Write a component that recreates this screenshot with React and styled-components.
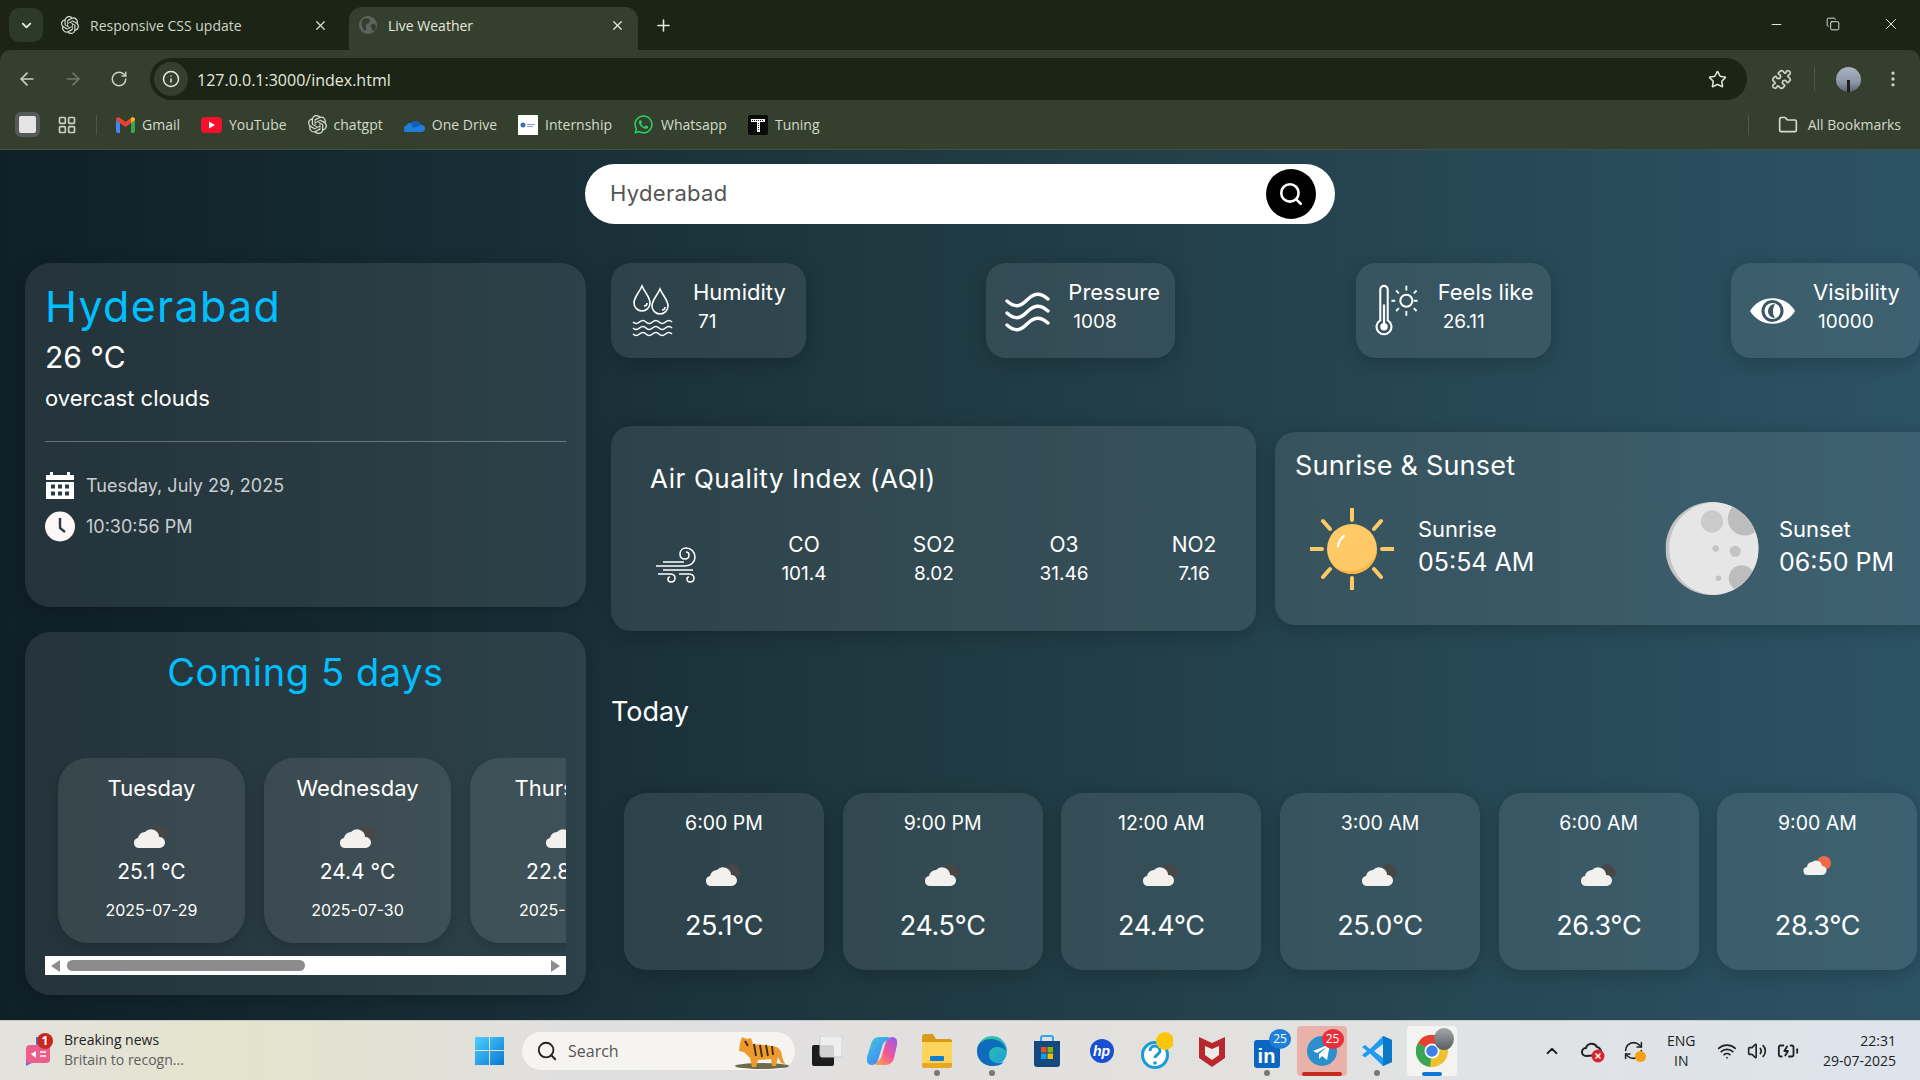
import styled, { createGlobalStyle } from 'styled-components'
import {
  ArrowLeft,
  ArrowRight,
  RotateCw,
  Info,
  Star,
  Puzzle,
  MoreVertical,
  Folder,
  Search as SearchIcon,
  Plus,
  X,
  Minus,
  Copy,
  ChevronDown,
  ChevronUp,
  LayoutGrid,
  Wifi,
  Volume2,
  BatteryCharging,
  RefreshCw,
} from 'lucide-react'
import { SiOpenai } from 'react-icons/si'
import { FaWhatsapp } from 'react-icons/fa'

const days = [
  { name: 'Tuesday', temp: '25.1 °C', date: '2025-07-29' },
  { name: 'Wednesday', temp: '24.4 °C', date: '2025-07-30' },
  { name: 'Thursday', temp: '22.8 °C', date: '2025-07-31' },
]

const hours = [
  { time: '6:00 PM', temp: '25.1°C' },
  { time: '9:00 PM', temp: '24.5°C' },
  { time: '12:00 AM', temp: '24.4°C' },
  { time: '3:00 AM', temp: '25.0°C' },
  { time: '6:00 AM', temp: '26.3°C' },
  { time: '9:00 AM', temp: '28.3°C', rain: true },
]

const pollutants = [
  { name: 'CO', value: '101.4' },
  { name: 'SO2', value: '8.02' },
  { name: 'O3', value: '31.46' },
  { name: 'NO2', value: '7.16' },
]

export default function App() {
  return (
    <>
      <GlobalStyle />
      <Screen>
        <BrowserChrome />
        <Page>
          <SearchBar>
            <SearchText>Hyderabad</SearchText>
            <SearchButton>
              <SearchIcon size={26} strokeWidth={2.4} color="#fff" />
            </SearchButton>
          </SearchBar>
          <Columns>
            <LeftColumn>
              <CurrentCard>
                <City>Hyderabad</City>
                <CurrentTemp>26 °C</CurrentTemp>
                <Condition>overcast clouds</Condition>
                <Divider />
                <MetaRow>
                  <CalendarIcon />
                  <MetaText>Tuesday, July 29, 2025</MetaText>
                </MetaRow>
                <MetaRow>
                  <ClockIcon />
                  <MetaText>10:30:56 PM</MetaText>
                </MetaRow>
              </CurrentCard>
              <ForecastCard>
                <ForecastTitle>Coming 5 days</ForecastTitle>
                <DayRow>
                  {days.map((d) => (
                    <DayCard key={d.date}>
                      <DayName>{d.name}</DayName>
                      <CloudIcon />
                      <DayTemp>{d.temp}</DayTemp>
                      <DayDate>{d.date}</DayDate>
                    </DayCard>
                  ))}
                </DayRow>
                <ScrollTrack>
                  <ScrollArrow $dir="left" />
                  <ScrollThumb />
                  <ScrollArrow $dir="right" />
                </ScrollTrack>
              </ForecastCard>
            </LeftColumn>
            <RightColumn>
              <StatRow>
                <StatCard $w={195}>
                  <HumidityIcon />
                  <StatText>
                    <StatLabel>Humidity</StatLabel>
                    <StatValue>71</StatValue>
                  </StatText>
                </StatCard>
                <StatCard $w={189}>
                  <PressureIcon />
                  <StatText>
                    <StatLabel>Pressure</StatLabel>
                    <StatValue>1008</StatValue>
                  </StatText>
                </StatCard>
                <StatCard $w={195}>
                  <FeelsIcon />
                  <StatText>
                    <StatLabel>Feels like</StatLabel>
                    <StatValue>26.11</StatValue>
                  </StatText>
                </StatCard>
                <StatCard $w={189}>
                  <EyeIcon />
                  <StatText>
                    <StatLabel>Visibility</StatLabel>
                    <StatValue>10000</StatValue>
                  </StatText>
                </StatCard>
              </StatRow>
              <MiddleRow>
                <AqiCard>
                  <AqiHeading>Air Quality Index (AQI)</AqiHeading>
                  <AqiGrid>
                    <WindIcon />
                    {pollutants.map((p) => (
                      <AqiCell key={p.name}>
                        <div>{p.name}</div>
                        <AqiValue>{p.value}</AqiValue>
                      </AqiCell>
                    ))}
                  </AqiGrid>
                </AqiCard>
                <SunCard>
                  <SunHeading>Sunrise &amp; Sunset</SunHeading>
                  <SunRow>
                    <SunGroup>
                      <SunIcon />
                      <SunText>
                        <SunLabel>Sunrise</SunLabel>
                        <SunTime>05:54 AM</SunTime>
                      </SunText>
                    </SunGroup>
                    <SunGroup>
                      <MoonIcon />
                      <SunText>
                        <SunLabel>Sunset</SunLabel>
                        <SunTime>06:50 PM</SunTime>
                      </SunText>
                    </SunGroup>
                  </SunRow>
                </SunCard>
              </MiddleRow>
              <TodayHeading>Today</TodayHeading>
              <HourRow>
                {hours.map((h) => (
                  <HourCard key={h.time}>
                    <HourTime>{h.time}</HourTime>
                    <HourIconSlot>{h.rain ? <RainIcon /> : <CloudIcon />}</HourIconSlot>
                    <HourTemp>{h.temp}</HourTemp>
                  </HourCard>
                ))}
              </HourRow>
            </RightColumn>
          </Columns>
        </Page>
        <WindowsTaskbar />
      </Screen>
    </>
  )
}

function BrowserChrome() {
  return (
    <>
      <TabStrip>
        <TabMenu>
          <ChevronDown size={15} strokeWidth={3} />
        </TabMenu>
        <Tab>
          <SiOpenai size={18} color="#d9dfd3" />
          <TabTitle>Responsive CSS update</TabTitle>
          <X size={15} strokeWidth={2} color="#d9dfd3" />
        </Tab>
        <Tab $active>
          <GlobeIcon />
          <TabTitle>Live Weather</TabTitle>
          <X size={15} strokeWidth={2} color="#e4e9de" />
        </Tab>
        <NewTab>
          <Plus size={19} strokeWidth={2} />
        </NewTab>
        <WindowControls>
          <Minus size={15} strokeWidth={1.5} />
          <Copy size={14} strokeWidth={1.5} />
          <X size={18} strokeWidth={1.3} />
        </WindowControls>
      </TabStrip>
      <Toolbar>
        <NavButton><ArrowLeft size={20} /></NavButton>
        <NavButton $off><ArrowRight size={20} /></NavButton>
        <NavButton><RotateCw size={18} /></NavButton>
        <AddressBar>
          <InfoChip>
            <Info size={18} />
          </InfoChip>
          <AddressText>127.0.0.1:3000/index.html</AddressText>
          <Star size={19} color="#dfe5d8" />
        </AddressBar>
        <ToolbarTools>
          <Puzzle size={21} color="#c9d2c0" />
          <ToolbarRule />
          <Avatar />
          <MoreVertical size={20} color="#c9d2c0" />
        </ToolbarTools>
      </Toolbar>
      <BookmarksBar>
        <AppSquare />
        <LayoutGrid size={20} color="#c9d2c0" />
        <BarRule />
        <Bookmark>
          <GmailIcon />
          Gmail
        </Bookmark>
        <Bookmark>
          <YoutubeIcon />
          YouTube
        </Bookmark>
        <Bookmark>
          <SiOpenai size={19} color="#d9dfd3" />
          chatgpt
        </Bookmark>
        <Bookmark>
          <OneDriveIcon />
          One Drive
        </Bookmark>
        <Bookmark>
          <InternshipIcon />
          Internship
        </Bookmark>
        <Bookmark>
          <FaWhatsapp size={21} color="#25d366" />
          Whatsapp
        </Bookmark>
        <Bookmark>
          <TuningIcon />
          Tuning
        </Bookmark>
        <AllBookmarks>
          <BarRule />
          <Folder size={20} color="#d3dacb" />
          All Bookmarks
        </AllBookmarks>
      </BookmarksBar>
    </>
  )
}

function WindowsTaskbar() {
  return (
    <Taskbar>
      <NewsBlock>
        <NewsIcon />
        <NewsText>
          <div>Breaking news</div>
          <NewsSub>Britain to recogn...</NewsSub>
        </NewsText>
      </NewsBlock>
      <TaskItem>
        <StartIcon />
      </TaskItem>
      <TaskSearch>
        <SearchIcon size={22} strokeWidth={2} color="#222" />
        <TaskSearchText>Search</TaskSearchText>
        <TigerIcon />
      </TaskSearch>
      <TaskItem><TaskViewIcon /></TaskItem>
      <TaskItem><CopilotIcon /></TaskItem>
      <TaskItem $dot><FilesIcon /></TaskItem>
      <TaskItem $dot><EdgeIcon /></TaskItem>
      <TaskItem><StoreIcon /></TaskItem>
      <TaskItem><HpIcon>hp</HpIcon></TaskItem>
      <TaskItem><HelpIcon /></TaskItem>
      <TaskItem><McafeeIcon /></TaskItem>
      <TaskItem $dot>
        <LinkedinTile>in</LinkedinTile>
        <CountBadge $bg="#1f7fd6">25</CountBadge>
      </TaskItem>
      <TaskItem $tone="telegram">
        <TelegramIcon />
        <CountBadge $bg="#e8303a">25</CountBadge>
      </TaskItem>
      <TaskItem $dot><VscodeIcon /></TaskItem>
      <TaskItem $tone="chrome">
        <ChromeIcon />
        <ChromeAvatar />
      </TaskItem>
      <Tray>
        <ChevronUp size={18} strokeWidth={2.4} color="#222" />
        <TrayCloudIcon />
        <TraySync>
          <RefreshCw size={21} strokeWidth={1.8} color="#222" />
          <SyncDot />
        </TraySync>
        <LangBlock>
          <div>ENG</div>
          <div>IN</div>
        </LangBlock>
        <TrayStatus>
          <Wifi size={20} color="#222" />
          <Volume2 size={20} color="#222" />
          <BatteryCharging size={22} color="#222" />
        </TrayStatus>
        <ClockBlock>
          <div>22:31</div>
          <div>29-07-2025</div>
        </ClockBlock>
      </Tray>
    </Taskbar>
  )
}

/* drawings */

function GlobeIcon() {
  return (
    <svg width="18" height="18" viewBox="0 0 18 18">
      <circle cx="9" cy="9" r="9" fill="#5d6462" />
      <path d="M4 3c3-1 6-1 7 1S8 8 7 9s1 3 0 5-3-1-4-4 0-5 1-7zM13 8c2-1 4 1 4 3s-2 4-3 4-1-3-2-4 0-2 1-3z" fill="#353f2e" />
    </svg>
  )
}

function CloudIcon() {
  return (
    <svg width="36" height="24" viewBox="0 0 36 24">
      <path d="M19 15a5 5 0 0 1 1-10 7 7 0 0 1 12 1 5 5 0 0 1 0 9z" fill="#474747" />
      <path
        d="M5 24a5 5 0 0 1-1-9.9A7 7 0 0 1 11 8a8 8 0 0 1 14 5 5.5 5.5 0 0 1 1 11z"
        fill="#f2f1ee"
      />
    </svg>
  )
}

function RainIcon() {
  return (
    <svg width="36" height="32" viewBox="0 0 36 32">
      <circle cx="25" cy="9" r="7" fill="#ee6b4a" />
      <path
        d="M9 21a4 4 0 0 1-1-8 5.5 5.5 0 0 1 5-5 6 6 0 0 1 10 4 4.5 4.5 0 0 1 0 9z"
        fill="#f2f1ee"
      />
      <path d="M12 24l-1 4M16 24l-1 5" stroke="#555" strokeWidth="1" />
    </svg>
  )
}

function CalendarIcon() {
  return (
    <svg width="30" height="28" viewBox="0 0 30 28" fill="#fff">
      <path d="M1 4h4V1h3v3h14V1h3v3h4v5H1z" />
      <path d="M1 11h28v17H1z" />
      <g fill="#2a3d46">
        <rect x="6" y="13.5" width="4" height="4" />
        <rect x="13" y="13.5" width="4" height="4" />
        <rect x="20" y="13.5" width="4" height="4" />
        <rect x="6" y="20.5" width="4" height="4" />
        <rect x="13" y="20.5" width="4" height="4" />
        <rect x="20" y="20.5" width="4" height="4" />
      </g>
    </svg>
  )
}

function ClockIcon() {
  return (
    <svg width="30" height="31" viewBox="0 0 30 31">
      <circle cx="15" cy="15.5" r="15" fill="#fdf7f7" />
      <path d="M15 7v10l5 4" fill="none" stroke="#2a3d46" strokeWidth="2.4" />
    </svg>
  )
}

function HumidityIcon() {
  return (
    <StatSvg viewBox="0 0 45 52" fill="none" stroke="#fff" strokeWidth="1.6">
      <path d="M12 1C9 8 4 12 4 18a8 8 0 0 0 16 0C20 12 15 8 12 1z" />
      <path d="M30 4c-3 7-8 11-8 17a8 8 0 0 0 16 0c0-6-5-10-8-17z" />
      <path d="M14 21a3 3 0 0 0 3-3M32 25a3 3 0 0 0 3-3" />
      <path d="M3 37q3 3 6.500 0t6.500 0 6.500 0 6.500 0 6.500 0 6.500 0" />
      <path d="M3 43q3 3 6.500 0t6.500 0 6.500 0 6.500 0 6.500 0 6.500 0" />
      <path d="M3 49q3 3 6.500 0t6.500 0 6.500 0 6.500 0 6.500 0 6.500 0" />
    </StatSvg>
  )
}

function PressureIcon() {
  return (
    <StatSvg viewBox="0 0 45 52" fill="none" stroke="#fff" strokeWidth="3.4" strokeLinecap="round">
      <path d="M2 16c8 7 13 6 20-1s13-8 21-1" />
      <path d="M2 28c8 7 13 6 20-1s13-8 21-1" />
      <path d="M2 40c8 7 13 6 20-1s13-8 21-1" />
    </StatSvg>
  )
}

function FeelsIcon() {
  return (
    <StatSvg viewBox="0 0 45 58" fill="none" stroke="#fff" strokeWidth="2">
      <path d="M4 6a4 4 0 0 1 8 0v33a8 8 0 1 1-8 0z" strokeWidth="2.2" />
      <path d="M8 22v24" strokeWidth="2.4" />
      <circle cx="8" cy="46" r="3" fill="#fff" />
      <circle cx="32" cy="18" r="6.500" strokeWidth="2.2" />
      <path d="M32 2v5M32 29v5M16 18h4M44 18h-4M21 7l3 3M43 7l-3 3M21 29l3-3M43 29l-3-3" />
    </StatSvg>
  )
}

function EyeIcon() {
  return (
    <StatSvg viewBox="0 0 45 52">
      <path d="M0 26C10 9 35 9 45 26 35 43 10 43 0 26z" fill="#fff" />
      <circle cx="22.500" cy="26" r="11" fill="#385664" />
      <circle cx="22.500" cy="26" r="8" fill="#fff" />
      <path d="M25 19a7 7 0 0 0-7 7c0 4 3 7 7 7a10 10 0 0 1-2-7c0-3 1-5 2-7z" fill="#385664" />
    </StatSvg>
  )
}

function WindIcon() {
  return (
    <WindSvg viewBox="0 0 42 36" fill="none" stroke="#fff" strokeWidth="1.500">
      <path d="M1 19h28c8 0 11-5 11-9 0-5-4-9-9-9-4 0-6 3-6 6s2 5 5 5 4-2 4-4-1-3-3-3" />
      <path d="M8 15h21M8 23h30" />
      <path d="M3 27h12c3 0 5 1 5 4s-2 4-4 4-3-1-3-3 1-2 2-2" />
      <path d="M24 27h9c4 0 6 1 6 4s-2 4-4 4-3-1-3-3 1-2 2-2" />
    </WindSvg>
  )
}

function SunIcon() {
  return (
    <SunSvg viewBox="0 0 84 82">
      <circle cx="42" cy="41" r="25" fill="#ffc965" />
      <path d="M22 56A25 25 0 0 0 67 41 27 27 0 0 1 22 56z" fill="#fbb540" />
      <path d="M28 38c1-5 3-8 6-10" stroke="#fff" strokeWidth="2.4" strokeLinecap="round" fill="none" />
      <path
        d="M42 1v11M42 70v11M1 41h11M72 41h11M13 13l7 8M71 13l-7 8M13 69l7-8M71 69l-7-8"
        stroke="#ffc965"
        strokeWidth="4"
        strokeLinecap="round"
      />
    </SunSvg>
  )
}

function MoonIcon() {
  return (
    <MoonSvg viewBox="0 0 100 100">
      <defs>
        <clipPath id="moonClip">
          <circle cx="50" cy="50" r="50" />
        </clipPath>
      </defs>
      <g clipPath="url(#moonClip)">
        <rect width="100" height="100" fill="#c4c4c4" />
        <circle cx="54" cy="50" r="50" fill="#e6e6e6" />
        <circle cx="50" cy="21" r="12" fill="#cbcbcb" />
        <circle cx="85" cy="18" r="18" fill="#bdbdbd" />
        <circle cx="82" cy="82" r="14" fill="#bdbdbd" />
        <circle cx="54" cy="50" r="3.500" fill="#c4c4c4" />
        <circle cx="75" cy="53" r="6" fill="#c4c4c4" />
        <circle cx="57" cy="82" r="3" fill="#c4c4c4" />
      </g>
    </MoonSvg>
  )
}

function GmailIcon() {
  return (
    <svg width="19" height="16" viewBox="0 0 19 16">
      <path d="M0 3v11a2 2 0 0 0 2 2h2V6z" fill="#4285f4" />
      <path d="M19 3v11a2 2 0 0 1-2 2h-2V6z" fill="#34a853" />
      <path d="M0 3l4 3 5.500 4L15 6l4-3c0-3-2.500-3.500-4-2L9.500 5 4 1C2.500-.5 0 0 0 3z" fill="#ea4335" />
      <path d="M15 6l4-3c0-3-2.500-3.500-4-2z" fill="#fbbc04" />
    </svg>
  )
}

function YoutubeIcon() {
  return (
    <svg width="21" height="16" viewBox="0 0 21 16">
      <rect width="21" height="16" rx="4" fill="#f70f2c" />
      <path d="M8 4.500v7l6-3.500z" fill="#fff" />
    </svg>
  )
}

function OneDriveIcon() {
  return (
    <svg width="21" height="14" viewBox="0 0 21 14">
      <path d="M3 14a3 3 0 0 1-1-6 5 5 0 0 1 5-3 6 6 0 0 1 10 2 3.500 3.500 0 0 1 1 7z" fill="#1f7fd8" />
      <path d="M7 5a6 6 0 0 1 10 2l-8 3z" fill="#0f5fb8" />
    </svg>
  )
}

function InternshipIcon() {
  return (
    <svg width="20" height="20" viewBox="0 0 20 20">
      <rect width="20" height="20" fill="#fff" />
      <circle cx="5" cy="10" r="2.500" fill="#3f6fb5" />
      <path d="M9 9h8v1H9zM9 11h6v1H9z" fill="#8aa0bd" />
    </svg>
  )
}

function TuningIcon() {
  return (
    <svg width="20" height="20" viewBox="0 0 20 20">
      <rect width="20" height="20" rx="2" fill="#0b0b0b" />
      <path d="M3 4h14v3h-5v10H9V7H3z" fill="#fff" />
      <path d="M4 5.500h12M10.500 8v8" stroke="#0b0b0b" strokeDasharray="1 1" />
    </svg>
  )
}

function NewsIcon() {
  return (
    <NewsSvg viewBox="0 0 34 36">
      <path d="M12 4h14v24H12z" fill="#3d7be0" />
      <path d="M2 15l6-1v16l-6 3z" fill="#8c63dc" />
      <rect x="2" y="12" width="24" height="18" rx="4" fill="#ee5e8c" />
      <path d="M7 21l5-3v7z" fill="#fff" />
      <path d="M16 19h6M16 23h6" stroke="#fff" strokeWidth="1.500" />
      <circle cx="21" cy="8" r="8" fill="#c9271f" />
      <NewsCount x="21" y="12">1</NewsCount>
    </NewsSvg>
  )
}

function StartIcon() {
  return (
    <svg width="29" height="29" viewBox="0 0 29 29">
      <defs>
        <linearGradient id="startFill" x1="0" y1="0" x2="1" y2="1">
          <stop offset="0" stopColor="#4fd0fb" />
          <stop offset="1" stopColor="#0678d4" />
        </linearGradient>
      </defs>
      <path d="M0 1h14v13H0zM15 1h14v13H15zM0 15h14v14H0zM15 15h14v14H15z" fill="url(#startFill)" />
    </svg>
  )
}

function TigerIcon() {
  return (
    <TigerSvg viewBox="0 0 58 36">
      <ellipse cx="30" cy="33" rx="27" ry="3" fill="#6e6a4a" />
      <path d="M10 4l5 2 4-1 2 6 20 2c6 1 9 5 9 11l3 7-4-1-3-6-2 9h-4l-1-7-13 1-2 7h-4l-2-9-6-6-5-1 1-8z" fill="#ef9a2c" />
      <path d="M22 11l2 12M28 12l2 12M34 12l2 11M40 13l1 9M13 8l3 5" stroke="#3a2a12" strokeWidth="1.800" />
    </TigerSvg>
  )
}

function TaskViewIcon() {
  return (
    <svg width="31" height="30" viewBox="0 0 31 30">
      <rect x="1" y="9" width="22" height="21" rx="2" fill="#1d1d1d" />
      <rect x="9" y="0" width="22" height="21" rx="2" fill="#f1f1f1" fillOpacity="0.85" stroke="#ccc" />
    </svg>
  )
}

function CopilotIcon() {
  return (
    <svg width="30" height="30" viewBox="0 0 30 30">
      <defs>
        <linearGradient id="coA" x1="0" y1="0" x2="1" y2="1">
          <stop offset="0" stopColor="#45d0c8" />
          <stop offset="0.5" stopColor="#3f9ff0" />
          <stop offset="1" stopColor="#7c6cf0" />
        </linearGradient>
        <linearGradient id="coB" x1="0" y1="1" x2="1" y2="0">
          <stop offset="0" stopColor="#f7b23b" />
          <stop offset="0.5" stopColor="#f2559a" />
          <stop offset="1" stopColor="#8f5cf0" />
        </linearGradient>
      </defs>
      <path d="M18 29h-8c-3 0-3-3-3-3 5 0 7-3 8-7l3-10c1-4 3-8 7-8 4 0 6 3 5 8l-3 13c-1 4-4 7-9 7z" fill="url(#coB)" />
      <path d="M12 1h8c3 0 3 3 3 3-5 0-7 3-8 7l-3 10c-1 4-3 8-7 8-4 0-6-3-5-8L4 8c1-4 4-7 8-7z" fill="url(#coA)" />
    </svg>
  )
}

function FilesIcon() {
  return (
    <svg width="32" height="36" viewBox="0 0 32 36">
      <path d="M1 4a3 3 0 0 1 3-3h8l3 5h14a2 2 0 0 1 2 2v4H1z" fill="#d99a15" />
      <path d="M1 9h30v24a2 2 0 0 1-2 2H3a2 2 0 0 1-2-2z" fill="#fcd35b" />
      <rect x="9" y="23" width="14" height="5" rx="1" fill="#0f7fd0" />
      <path d="M1 30h30v3a2 2 0 0 1-2 2H3a2 2 0 0 1-2-2z" fill="#e9a81f" />
    </svg>
  )
}

function EdgeIcon() {
  return (
    <svg width="30" height="30" viewBox="0 0 30 30">
      <defs>
        <linearGradient id="edgeA" x1="0" y1="0" x2="1" y2="1">
          <stop offset="0" stopColor="#37d08d" />
          <stop offset="1" stopColor="#1b9de2" />
        </linearGradient>
      </defs>
      <circle cx="15" cy="15" r="15" fill="url(#edgeA)" />
      <path d="M0 15C0 6 8 3 14 3c8 0 14 5 15 12-3-4-9-5-13-3-4 2-5 7-3 11 2 3 8 6 14 3-3 3-7 4-11 4C7 30 0 24 0 15z" fill="#0f6cbd" />
    </svg>
  )
}

function StoreIcon() {
  return (
    <svg width="28" height="34" viewBox="0 0 28 34">
      <path d="M8 8V4a2 2 0 0 1 2-2h8a2 2 0 0 1 2 2v4" fill="none" stroke="#2aa8e8" strokeWidth="2" />
      <path d="M1 7h26v23a3 3 0 0 1-3 3H4a3 3 0 0 1-3-3z" fill="#14497f" />
      <path d="M8 13h5.500v5.500H8z" fill="#f25022" />
      <path d="M14.500 13H20v5.500h-5.500z" fill="#7fba00" />
      <path d="M8 19.500h5.500V25H8z" fill="#00a4ef" />
      <path d="M14.500 19.500H20V25h-5.500z" fill="#ffb900" />
    </svg>
  )
}

function HelpIcon() {
  return (
    <svg width="32" height="38" viewBox="0 0 32 38">
      <circle cx="14" cy="23" r="12.500" fill="#fff" stroke="#1a9bd8" strokeWidth="3" />
      <path d="M9 19c0-3 2-5 5-5s5 2 5 5-5 4-5 7" fill="none" stroke="#1a9bd8" strokeWidth="3" />
      <circle cx="14" cy="31" r="1.800" fill="#1a9bd8" />
      <circle cx="24" cy="9" r="9" fill="#fdc50c" />
    </svg>
  )
}

function McafeeIcon() {
  return (
    <svg width="28" height="32" viewBox="0 0 28 32">
      <path d="M1 2l13 6 13-6v21l-13 9-13-9z" fill="#b9272f" />
      <path d="M7 11l7 3 7-3v9l-7 5-7-5z" fill="#eceae6" />
    </svg>
  )
}

function TelegramIcon() {
  return (
    <svg width="30" height="30" viewBox="0 0 30 30">
      <circle cx="15" cy="15" r="15" fill="#2a8fcb" />
      <path d="M6 15l17-7-3 16-5-4-3 3v-5l8-7-10 6z" fill="#fff" />
    </svg>
  )
}

function VscodeIcon() {
  return (
    <svg width="30" height="30" viewBox="0 0 30 30">
      <path d="M21 0l9 4v22l-9 4-13-12.500-5 4L0 19l5-4-5-4 3-2 5 4z" fill="#1f9cf0" />
      <path d="M21 8l-9 7 9 7z" fill="#e6e8ea" />
      <path d="M21 0l9 4v22l-9 4z" fill="#0a78c8" />
    </svg>
  )
}

function ChromeIcon() {
  return (
    <svg width="32" height="32" viewBox="0 0 32 32">
      <circle cx="16" cy="16" r="16" fill="#f1c02e" />
      <path d="M16 16L2 8a16 16 0 0 1 28 0z" fill="#e5402f" />
      <path d="M16 16L2 8a16 16 0 0 0 12 24z" fill="#3aa655" />
      <circle cx="16" cy="16" r="7.500" fill="#fff" />
      <circle cx="16" cy="16" r="5.800" fill="#3d80e8" />
    </svg>
  )
}

function TrayCloudIcon() {
  return (
    <TrayCloudSvg viewBox="0 0 24 24">
      <path d="M5 17a4 4 0 0 1 0-8 6 6 0 0 1 11-1 5 5 0 0 1 3 8z" fill="none" stroke="#222" strokeWidth="2" />
      <circle cx="17" cy="17" r="6.500" fill="#d9232e" />
      <path d="M14.500 14.500l5 5M19.500 14.500l-5 5" stroke="#fff" strokeWidth="1.500" />
    </TrayCloudSvg>
  )
}

/* page styles */

const GlobalStyle = createGlobalStyle`
  * {
    box-sizing: border-box;
  }

  html,
  body {
    margin: 0;
    height: 100%;
    overflow: hidden;
  }

  body {
    font-family: 'Inter', 'Lato', sans-serif;
  }
`

const Screen = styled.div`
  display: flex;
  flex-direction: column;
  width: 1920px;
  height: 1080px;
  overflow: hidden;
  background: #1b2415;
`

const Page = styled.main`
  flex: 1;
  min-height: 0;
  overflow: hidden;
  padding: 14px 0 0 25px;
  color: #fff;
  background: linear-gradient(to right, #0f2027, #203a43, #2c5364);
`

const SearchBar = styled.div`
  display: flex;
  align-items: center;
  justify-content: space-between;
  width: 750px;
  height: 60px;
  margin-left: 560px;
  padding: 0 19px 0 25px;
  border-radius: 30px;
  background: #fff;
`

const SearchText = styled.span`
  margin-bottom: 2px;
  font-size: 22px;
  letter-spacing: 0.3px;
  color: #555;
`

const SearchButton = styled.div`
  display: flex;
  align-items: center;
  justify-content: center;
  width: 50px;
  height: 50px;
  border-radius: 50%;
  background: #000;
`

const Columns = styled.div`
  display: flex;
  gap: 25px;
  margin-top: 39px;
`

const LeftColumn = styled.div`
  display: flex;
  flex-direction: column;
  gap: 25px;
  flex: 0 0 561px;
  min-width: 0;
`

const Panel = styled.section`
  border-radius: 25px;
  background: rgba(255, 255, 255, 0.085);
  box-shadow: 0 4px 20px rgba(0, 0, 0, 0.2);
`

const CurrentCard = styled(Panel)`
  height: 344px;
  padding: 17px 20px 0;
`

const City = styled.h1`
  margin: 0;
  font-size: 43px;
  font-weight: 400;
  letter-spacing: 1.3px;
  line-height: 52px;
  color: #00bfff;
`

const CurrentTemp = styled.div`
  margin-top: 5px;
  font-size: 30px;
  line-height: 40px;
`

const Condition = styled.div`
  margin-top: 6px;
  font-size: 22px;
  line-height: 30px;
`

const Divider = styled.hr`
  height: 1px;
  margin: 28px 0 29px;
  border: 0;
  background: rgba(255, 255, 255, 0.3);
`

const MetaRow = styled.div`
  display: flex;
  align-items: center;
  gap: 11px;
  margin-bottom: 12px;
`

const MetaText = styled.span`
  font-size: 18px;
  color: #c9cfd2;
`

const ForecastCard = styled(Panel)`
  height: 363px;
  padding: 15px 20px 0;
`

const ForecastTitle = styled.h2`
  margin: 0;
  font-size: 38px;
  font-weight: 400;
  letter-spacing: 0.6px;
  line-height: 50px;
  text-align: center;
  color: #00bfff;
`

const DayRow = styled.div`
  display: flex;
  gap: 19px;
  height: 200px;
  margin-top: 61px;
  padding-left: 13px;
  overflow: hidden;
`

const DayCard = styled.div`
  display: flex;
  flex: 0 0 187px;
  flex-direction: column;
  align-items: center;
  height: 185px;
  padding-top: 16px;
  border-radius: 30px;
  background: rgba(255, 255, 255, 0.09);
  box-shadow: 0 4px 12px rgba(0, 0, 0, 0.15);
`

const DayName = styled.div`
  margin-bottom: 22px;
  font-size: 22px;
  line-height: 28px;
`

const DayTemp = styled.div`
  margin-top: 9px;
  font-size: 21px;
  line-height: 30px;
`

const DayDate = styled.div`
  margin-top: 10px;
  font-size: 16px;
  line-height: 26px;
`

const ScrollTrack = styled.div`
  display: flex;
  align-items: center;
  justify-content: space-between;
  height: 19px;
  margin-top: -2px;
  padding: 0 6px;
  background: #fff;
`

const ScrollThumb = styled.div`
  width: 238px;
  height: 11px;
  margin: 0 auto 0 7px;
  border-radius: 6px;
  background: #8c8c8c;
`

const ScrollArrow = styled.span`
  width: 0;
  height: 0;
  border-top: 6px solid transparent;
  border-bottom: 6px solid transparent;
  border-left: ${(props) => (props.$dir === 'right' ? '9px solid #8c8c8c' : '0')};
  border-right: ${(props) => (props.$dir === 'left' ? '9px solid #8c8c8c' : '0')};
`

const RightColumn = styled.div`
  flex: 1;
  min-width: 0;
`

const StatRow = styled.div`
  display: flex;
  justify-content: space-between;
`

const StatCard = styled(Panel)`
  display: flex;
  align-items: center;
  flex: 0 0 ${(props) => props.$w}px;
  gap: 18px;
  height: 95px;
  padding: 0 0 0 19px;
  border-radius: 20px;
`

const StatSvg = styled.svg`
  flex: 0 0 45px;
  width: 45px;
  height: 54px;
`

const StatText = styled.div`
  padding-bottom: 8px;
  white-space: nowrap;
`

const StatLabel = styled.div`
  font-size: 22px;
  line-height: 29px;
`

const StatValue = styled.div`
  padding-left: 5px;
  font-size: 19px;
  line-height: 29px;
`

const MiddleRow = styled.div`
  display: flex;
  align-items: center;
  gap: 19px;
  margin-top: 68px;
`

const AqiCard = styled(Panel)`
  flex: 0 0 645px;
  min-width: 0;
  height: 205px;
  padding: 35px 0 0 39px;
  border-radius: 20px;
`

const AqiHeading = styled.h3`
  margin: 0;
  font-size: 26px;
  font-weight: 400;
  letter-spacing: 0.6px;
  line-height: 36px;
`

const AqiGrid = styled.div`
  display: grid;
  grid-template-columns: 89px repeat(4, 130px);
  align-items: center;
  margin-top: 33px;
`

const WindSvg = styled.svg`
  width: 42px;
  height: 36px;
  margin: 12px 0 0 5px;
`

const AqiCell = styled.div`
  font-size: 21px;
  line-height: 29px;
  text-align: center;
`

const AqiValue = styled.div`
  font-size: 19px;
`

const SunCard = styled(Panel)`
  flex: 0 0 660px;
  height: 193px;
  padding: 16px 0 0 20px;
  border-radius: 20px;
`

const SunHeading = styled.h3`
  margin: 0;
  font-size: 27px;
  font-weight: 400;
  letter-spacing: 0.2px;
  line-height: 36px;
`

const SunRow = styled.div`
  display: flex;
  align-items: center;
  margin-top: 18px;
`

const SunGroup = styled.div`
  display: flex;
  flex: 0 0 370px;
  align-items: center;
  gap: 20px;
`

const SunText = styled.div`
  padding-bottom: 4px;
`

const SunSvg = styled.svg`
  width: 84px;
  height: 82px;
  margin: 0 4px 0 15px;
`

const MoonSvg = styled.svg`
  width: 94px;
  height: 93px;
`

const SunLabel = styled.div`
  font-size: 22px;
  line-height: 30px;
`

const SunTime = styled.div`
  font-size: 25px;
  line-height: 36px;
  white-space: nowrap;
`

const TodayHeading = styled.h3`
  margin: 63px 0 0;
  font-size: 27px;
  font-weight: 400;
  line-height: 36px;
`

const HourRow = styled.div`
  display: flex;
  gap: 18.7px;
  margin-top: 63px;
  padding-left: 13px;
`

const HourCard = styled(Panel)`
  display: flex;
  flex: 0 0 200px;
  flex-direction: column;
  align-items: center;
  height: 177px;
  padding-top: 16px;
  border-radius: 22px;
`

const HourTime = styled.div`
  font-size: 19.5px;
  line-height: 28px;
`

const HourIconSlot = styled.div`
  display: flex;
  align-items: flex-end;
  justify-content: center;
  height: 36px;
  margin-top: 13px;
`

const HourTemp = styled.div`
  margin-top: 22px;
  font-size: 27px;
  letter-spacing: -0.4px;
  line-height: 36px;
`

/* browser chrome */

const TabStrip = styled.div`
  display: flex;
  flex: 0 0 50px;
  align-items: flex-end;
  padding-left: 9px;
  font-family: 'Open Sans', sans-serif;
  background: #1b2415;
`

const TabMenu = styled.div`
  display: flex;
  align-items: center;
  justify-content: center;
  width: 34px;
  height: 34px;
  margin: 0 0 8px 0;
  border-radius: 10px;
  color: #e4e9de;
  background: #2e3a28;
`

const Tab = styled.div`
  position: relative;
  display: flex;
  flex: 0 0 ${(props) => (props.$active ? '289px' : '310px')};
  align-items: center;
  height: 43px;
  margin-left: ${(props) => (props.$active ? '-4px' : '0')};
  padding: 0 ${(props) => (props.$active ? '13px' : '25px')} 7px ${(props) => (props.$active ? '10px' : '18px')};
  border-radius: 13px 13px 0 0;
  color: ${(props) => (props.$active ? '#e4e9de' : '#cdd5c5')};
  background: ${(props) => (props.$active ? '#353f2e' : 'transparent')};
`

const TabTitle = styled.span`
  flex: 1;
  margin-left: 11px;
  font-size: 14px;
`

const NewTab = styled.div`
  display: flex;
  align-items: center;
  height: 50px;
  margin-left: 16px;
  color: #e4e9de;
`

const WindowControls = styled.div`
  display: flex;
  align-items: center;
  gap: 42px;
  height: 48px;
  margin-left: auto;
  padding: 0 20px 0 0;
  align-self: flex-start;
  color: #f1f3ee;
`

const Toolbar = styled.div`
  display: flex;
  flex: 0 0 50px;
  align-items: flex-end;
  gap: 0;
  padding: 0 0 0 4px;
  border-radius: 10px 10px 0 0;
  background: #353f2e;
`

const NavButton = styled.div`
  display: flex;
  align-items: center;
  justify-content: center;
  width: 46px;
  height: 42px;
  color: ${(props) => (props.$off ? '#6f7a67' : '#c9d2c0')};
`

const AddressBar = styled.div`
  display: flex;
  align-items: center;
  width: 1597px;
  height: 42px;
  margin-left: 8px;
  padding: 0 20px 0 4px;
  border-radius: 21px;
  background: #1b2415;
`

const InfoChip = styled.div`
  display: flex;
  align-items: center;
  justify-content: center;
  width: 34px;
  height: 34px;
  border-radius: 50%;
  color: #e4e9de;
  background: #353f2e;
`

const AddressText = styled.span`
  flex: 1;
  margin: 2px 0 0 9px;
  font-family: 'Open Sans', sans-serif;
  font-size: 16px;
  color: #e4e9de;
`

const ToolbarTools = styled.div`
  display: flex;
  align-items: center;
  height: 42px;
  padding-left: 24px;
`

const ToolbarRule = styled.span`
  width: 1px;
  height: 24px;
  margin: 0 21px 0 22px;
  background: #4d5946;
`

const Avatar = styled.span`
  position: relative;
  width: 25px;
  height: 25px;
  margin-right: 22px;
  border-radius: 50%;
  background: linear-gradient(#a9b4c4, #8a93a3 65%, #5c5f68);

  &::after {
    content: '';
    position: absolute;
    left: 11px;
    bottom: 0;
    width: 3px;
    height: 12px;
    background: #1c1c22;
  }
`

const BookmarksBar = styled.div`
  display: flex;
  flex: 0 0 50px;
  align-items: center;
  padding-left: 15px;
  font-family: 'Open Sans', sans-serif;
  font-size: 14px;
  color: #d3dacb;
  background: #353f2e;
  border-bottom: 1px solid #46503e;
`

const AppSquare = styled.span`
  width: 25px;
  height: 25px;
  margin-right: 17px;
  border: 4px solid #555b5a;
  border-radius: 6px;
  background: #e4e4e4;
`

const BarRule = styled.span`
  width: 1px;
  height: 20px;
  margin: 0 19px;
  background: #4d5946;
`

const Bookmark = styled.span`
  display: flex;
  align-items: center;
  gap: 7px;
  margin-right: 21px;
  white-space: nowrap;
`

const AllBookmarks = styled.span`
  display: flex;
  align-items: center;
  gap: 10px;
  margin-left: auto;
  padding-right: 19px;
  white-space: nowrap;
`

/* taskbar */

const Taskbar = styled.footer`
  display: flex;
  flex: 0 0 60px;
  align-items: center;
  font-family: 'Open Sans', sans-serif;
  color: #222;
  background: linear-gradient(to right, #e3e2de, #e4e4cc 12%, #e0dfe0 30%, #e3e1de 60%, #dde4ec);
  border-top: 1px solid #c9c9c9;
`

const NewsBlock = styled.div`
  display: flex;
  flex: 0 0 462px;
  align-items: center;
  gap: 6px;
  padding-left: 24px;
`

const NewsSvg = styled.svg`
  width: 34px;
  height: 36px;
`

const NewsCount = styled.text`
  font-size: 12px;
  font-weight: 700;
  text-anchor: middle;
  fill: #fff;
`

const NewsText = styled.div`
  margin-bottom: 1px;
  font-size: 14px;
  line-height: 20px;
`

const NewsSub = styled.div`
  color: #5d5d5d;
`

const TaskSearch = styled.div`
  display: flex;
  flex: 0 0 273px;
  align-items: center;
  height: 38px;
  margin: 0 4px 0 5px;
  padding-left: 14px;
  border-radius: 19px;
  background: #f5f4f1;
`

const TaskSearchText = styled.span`
  margin-left: 10px;
  font-size: 16px;
  color: #555;
`

const TigerSvg = styled.svg`
  width: 58px;
  height: 36px;
  margin-left: auto;
  margin-right: 5px;
`

const TaskItem = styled.div`
  position: relative;
  display: flex;
  flex: 0 0 55px;
  align-items: center;
  justify-content: center;
  height: 50px;
  border-radius: 4px;
  background: ${(props) =>
    props.$tone === 'telegram' ? '#e8b2ab' : props.$tone === 'chrome' ? '#f3f3f2' : 'transparent'};
  ${(props) => props.$tone && 'flex-basis: 50px; margin: 0 2.5px;'}

  &::after {
    content: '';
    position: absolute;
    left: 50%;
    bottom: 0;
    transform: translateX(-50%);
    width: ${(props) => (props.$tone === 'telegram' ? '40px' : props.$tone === 'chrome' ? '20px' : '6px')};
    height: ${(props) => (props.$tone ? '4px' : '6px')};
    border-radius: 3px;
    display: ${(props) => (props.$dot || props.$tone ? 'block' : 'none')};
    background: ${(props) =>
      props.$tone === 'telegram' ? '#c5281c' : props.$tone === 'chrome' ? '#0f78d4' : '#777'};
  }
`

const HpIcon = styled.span`
  display: flex;
  align-items: center;
  justify-content: center;
  width: 24px;
  height: 24px;
  border-radius: 50%;
  font-family: 'Liberation Sans', sans-serif;
  font-size: 14px;
  font-style: italic;
  font-weight: 700;
  color: #fff;
  background: #1a4fd0;
`

const LinkedinTile = styled.span`
  display: flex;
  align-items: flex-end;
  justify-content: center;
  width: 26px;
  height: 28px;
  margin-top: 6px;
  border-radius: 3px;
  font-family: 'Liberation Sans', sans-serif;
  font-size: 20px;
  font-weight: 700;
  color: #fff;
  background: #0a66c2;
`

const CountBadge = styled.span`
  position: absolute;
  top: 3px;
  right: 3px;
  display: flex;
  align-items: center;
  justify-content: center;
  width: 22px;
  height: 20px;
  border-radius: 50%;
  font-size: 12px;
  color: #fff;
  background: ${(props) => props.$bg};
`

const ChromeAvatar = styled.span`
  position: absolute;
  top: 2px;
  right: 3px;
  width: 20px;
  height: 22px;
  border-radius: 50%;
  background: linear-gradient(#a3a7ac, #5a5d62);
`

const Tray = styled.div`
  display: flex;
  flex: 1;
  align-items: center;
  padding: 0 24px 0 84px;
`

const TrayCloudSvg = styled.svg`
  width: 24px;
  height: 24px;
  margin-left: 20px;
`

const TraySync = styled.span`
  position: relative;
  display: flex;
  margin-left: 18px;
`

const SyncDot = styled.span`
  position: absolute;
  right: -2px;
  bottom: -1px;
  width: 11px;
  height: 11px;
  border-radius: 50%;
  background: #f5a014;
`

const LangBlock = styled.div`
  margin-left: 23px;
  font-size: 14px;
  line-height: 20px;
  text-align: center;
`

const TrayStatus = styled.div`
  display: flex;
  align-items: center;
  gap: 10px;
  margin-left: 21px;
`

const ClockBlock = styled.div`
  margin-left: auto;
  font-size: 14px;
  line-height: 20px;
  text-align: right;
`
